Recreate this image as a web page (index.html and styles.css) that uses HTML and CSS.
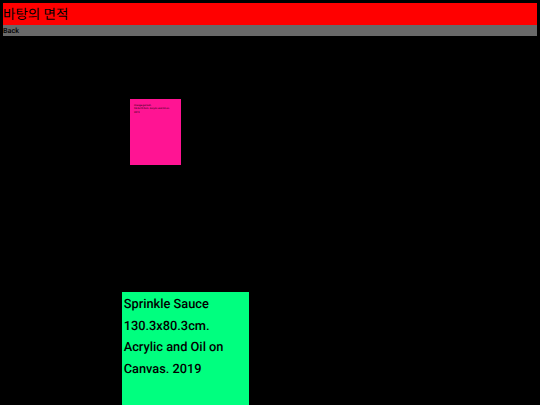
FILE: index.html
```html
<!DOCTYPE html>
<html lang="ko">
<head>
    <meta charset="UTF-8">
    <meta name="viewport" content="width=device-width, initial-scale=1.0">
    <title>바탕의 면적</title>
    <link rel="stylesheet" href="styles.css">
</head>
<body>
    <header class="top">
        <h1 class="title">바탕의 면적</h1>
        <div class="back">Back</div>
    </header>

    <!-- works placed on the black wall -->
    <div class="wall">
        <div class="work work-small">
            <p>Orange garnish</p>
            <p>53.0x45.5cm. Acrylic and Oil on</p>
            <p>2019</p>
        </div>
        <div class="work work-large">
            <p>Sprinkle Sauce</p>
            <p>130.3x80.3cm.</p>
            <p>Acrylic and Oil on</p>
            <p>Canvas. 2019</p>
        </div>
    </div>
</body>
</html>
```

FILE: styles.css
```css
html, body {
    height: 100%;
}
body {
    margin: 0;
    padding: 3px;
    box-sizing: border-box;
    background: #000;
    color: #000;
    font-family: Roboto, "Noto Sans CJK KR", sans-serif;
    text-rendering: geometricPrecision;
    overflow: hidden;
    position: relative;
}
.top {
    width: 533.6px;
}
.title {
    margin: 0;
    height: 22px;
    background: #f00;
    font-size: 13.5px;
    font-weight: 400;
    line-height: 25px;
}
.back {
    height: 10px;
    padding-top: 1px;
    background: #696969;
    font-size: 7.2px;
    font-weight: 500;
    line-height: 10px;
}
.work {
    position: absolute;
    box-sizing: border-box;
}
.work p {
    margin: 0;
}
.work-small {
    left: 130px;
    top: 99.3px;
    width: 50.6px;
    height: 65.6px;
    padding: 4.4px 4px;
    background: #ff1493;
    font-size: 2.5px;
    line-height: 3.6px;
}
.work-large {
    left: 121.7px;
    top: 291.7px;
    width: 127.6px;
    height: 120px;
    padding: 2.6px 2px;
    background: #00ff7f;
    font-size: 12.8px;
    font-weight: 500;
    line-height: 21.5px;
}
```
